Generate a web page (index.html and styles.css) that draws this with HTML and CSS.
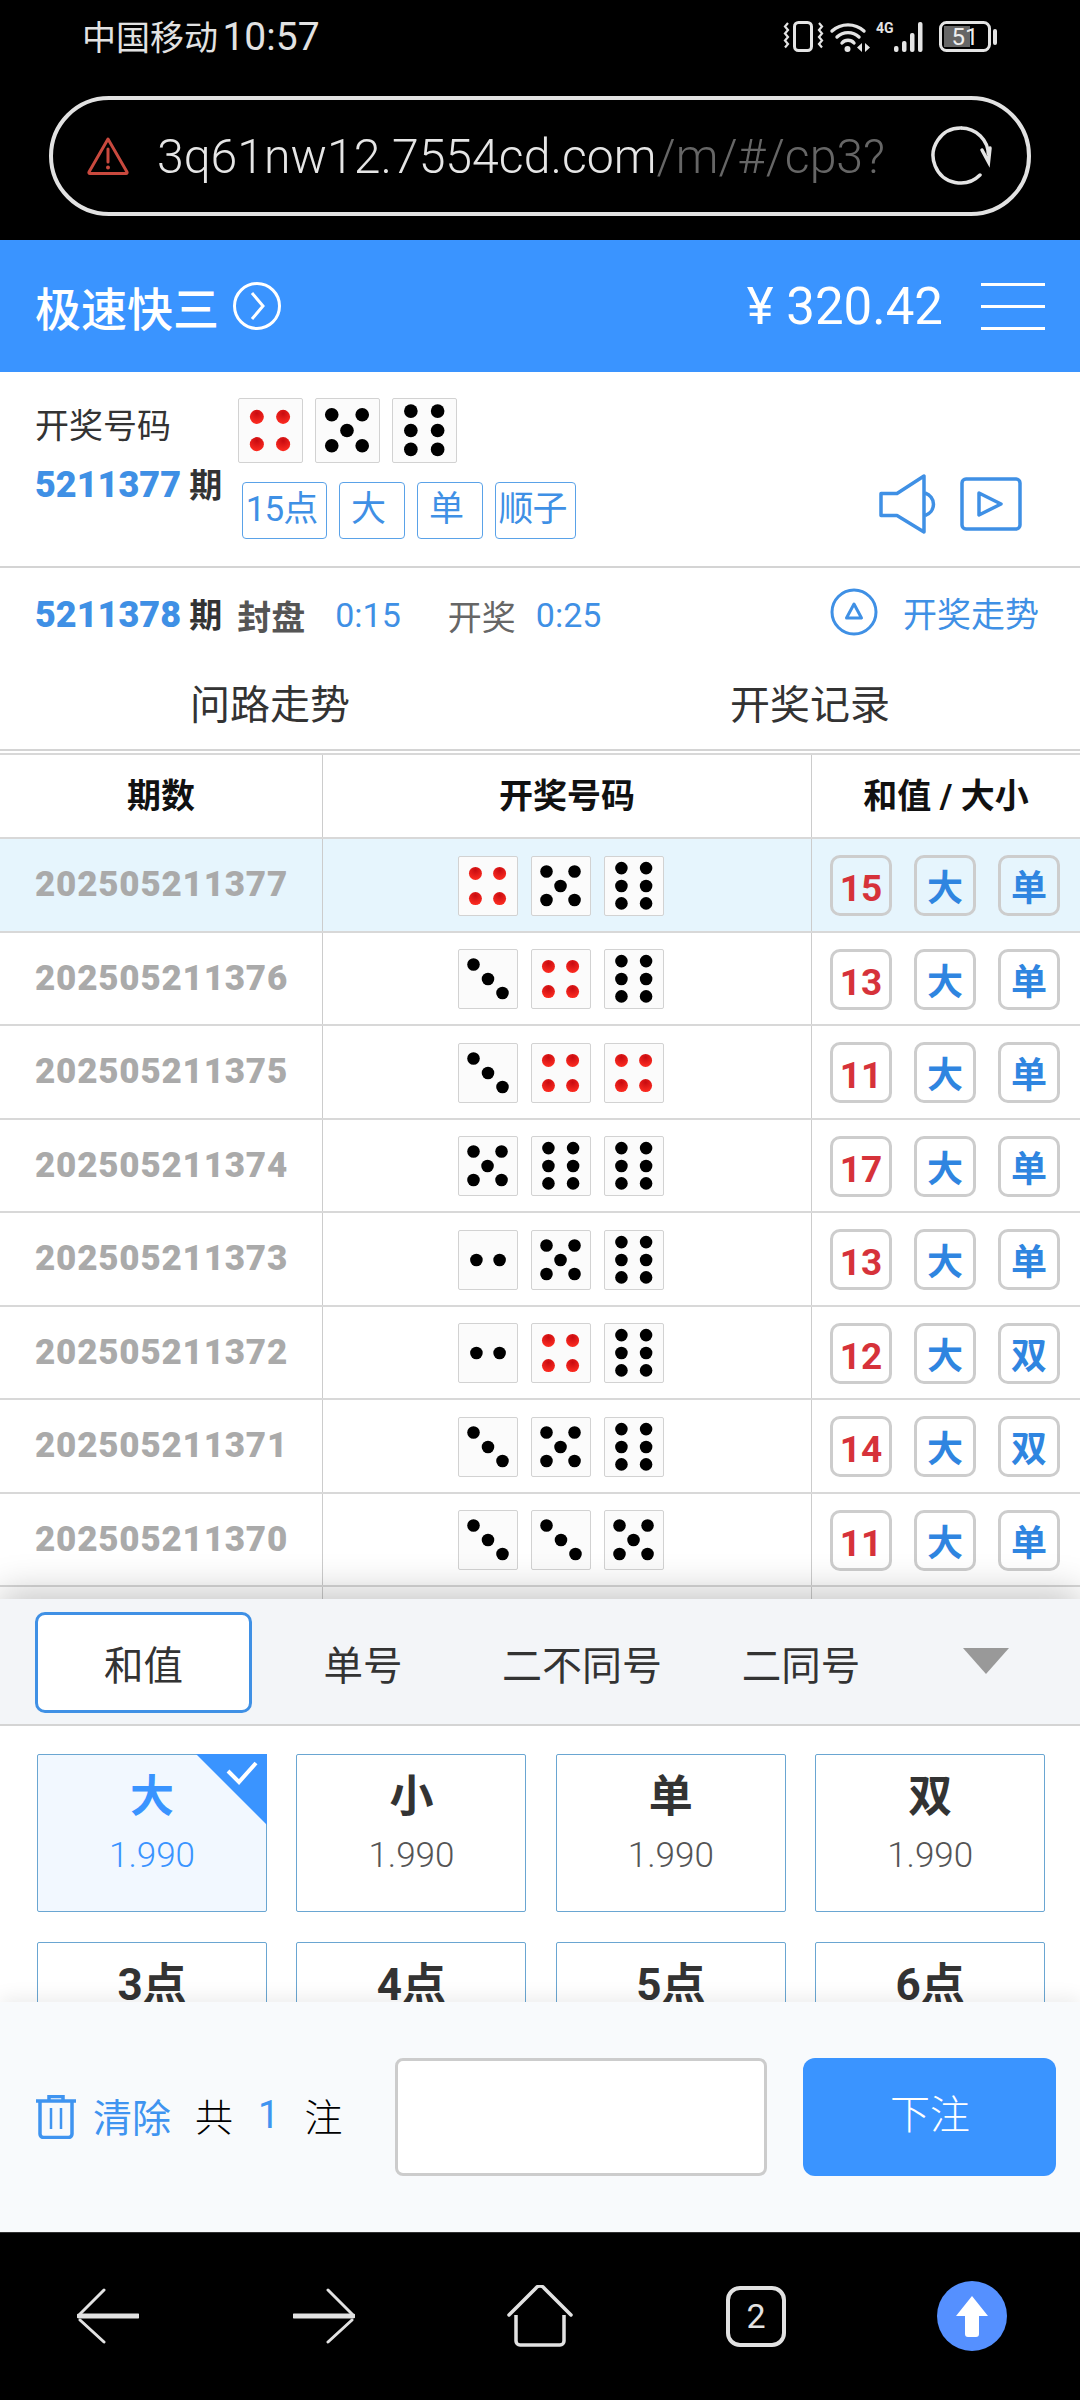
FILE: index.html
```html
<!DOCTYPE html>
<html lang="zh-CN">
<head>
<meta charset="utf-8">
<title>极速快三</title>
<link rel="stylesheet" href="styles.css">
</head>
<body>
<svg class="defs" width="0" height="0" aria-hidden="true">
  <defs>
    <radialGradient id="red" cx="50%" cy="25%" r="70%">
      <stop offset="0" stop-color="#c80b10"/>
      <stop offset="1" stop-color="#fa2a20"/>
    </radialGradient>
    <symbol id="d2" viewBox="0 0 60 60"><circle cx="18" cy="30" r="6.5"/><circle cx="42" cy="30" r="6.5"/></symbol>
    <symbol id="d3" viewBox="0 0 60 60"><circle cx="15" cy="15" r="6.5"/><circle cx="30" cy="30" r="6.5"/><circle cx="45" cy="44.5" r="6.5"/></symbol>
    <symbol id="d4" viewBox="0 0 60 60"><g fill="url(#red)"><circle cx="17" cy="17" r="6.7"/><circle cx="42" cy="17" r="6.7"/><circle cx="17" cy="43" r="6.7"/><circle cx="42" cy="43" r="6.7"/></g></symbol>
    <symbol id="d5" viewBox="0 0 60 60"><circle cx="15" cy="15" r="6.5"/><circle cx="44" cy="15" r="6.5"/><circle cx="29.5" cy="30" r="6.5"/><circle cx="15" cy="44.5" r="6.5"/><circle cx="44" cy="44.5" r="6.5"/></symbol>
    <symbol id="d6" viewBox="0 0 60 60"><circle cx="17" cy="11.5" r="6.5"/><circle cx="42.5" cy="11.5" r="6.5"/><circle cx="17" cy="30" r="6.5"/><circle cx="42.5" cy="30" r="6.5"/><circle cx="17" cy="48" r="6.5"/><circle cx="42.5" cy="48" r="6.5"/></symbol>
  </defs>
</svg>

<div class="status">
  <span class="status-text">中国移动 <span class="status-time">10:57</span></span>
  <svg class="status-icons" width="222" height="36" viewBox="0 0 222 36">
    <g fill="none" stroke="#e4e4e4">
      <rect x="16.5" y="2.5" width="17" height="28" rx="4" stroke-width="3"/>
      <path d="M10 3l-3 3.500 3 3.500-3 3.500 3 3.500-3 3.500 3 3.500-3 3.500M41 3l3 3.500-3 3.500 3 3.500-3 3.500 3 3.500-3 3.500 3 3.500" stroke-width="2.200"/>
      <g stroke-width="3.400" stroke-linecap="round">
        <path d="M54 11a24 24 0 0 1 32 0"/>
        <path d="M59 17a16 16 0 0 1 22 0"/>
        <path d="M64 23a8 8 0 0 1 12 0"/>
      </g>
      <rect x="162.500" y="2.500" width="49" height="28" rx="6" stroke-width="3"/>
    </g>
    <g fill="#e4e4e4">
      <circle cx="69.500" cy="29" r="3"/>
      <path d="M84 23l-5 4.500 5 4.500zM87 23l5 4.500-5 4.500z"/>
      <rect x="116" y="26" width="4.500" height="6" rx="2"/>
      <rect x="124" y="21" width="4.500" height="11" rx="2"/>
      <rect x="132" y="13" width="4.500" height="19" rx="2"/>
      <rect x="140" y="2" width="4.500" height="30" rx="2"/>
      <rect x="215" y="9" width="4" height="16" rx="2"/>
      <rect x="166" y="6" width="26" height="21" fill="#666"/>
      <text class="st-4g" x="98" y="13">4G</text>
      <text class="st-bat" x="187" y="25" text-anchor="middle">51</text>
    </g>
  </svg>
</div>

<div class="url-wrap">
  <div class="url">
    <svg class="url-warn" width="44" height="40" viewBox="0 0 44 40">
      <path d="M22 3L41 36a1 1 0 0 1-1 1.500H4a1 1 0 0 1-1-1.500z" fill="none" stroke="#c9493e" stroke-width="3" stroke-linejoin="round"/>
      <path d="M22 13v13" stroke="#c9493e" stroke-width="3" stroke-linecap="round"/>
      <circle cx="22" cy="31.500" r="2" fill="#c9493e"/>
    </svg>
    <span class="url-text">3q61nw12.7554cd.com<span class="url-dim">/m/#/cp3?</span></span>
    <svg class="url-reload" width="62" height="62" viewBox="0 0 62 62">
      <path d="M31 3a27.500 27.500 0 1 0 19 47" fill="none" stroke="#e4e4e4" stroke-width="3.500" stroke-linecap="round"/>
      <path d="M31 3a27.500 27.500 0 0 1 27.500 27.500" fill="none" stroke="#e4e4e4" stroke-width="3.500"/>
      <path d="M52 25l6.500 12 1.500-14" fill="none" stroke="#e4e4e4" stroke-width="3.500" stroke-linecap="round"/>
    </svg>
  </div>
</div>

<header class="top">
  <span class="top-title">极速快三</span>
  <svg class="top-go" width="50" height="50" viewBox="0 0 50 50">
    <circle cx="25" cy="25" r="22.500" fill="none" stroke="#fff" stroke-width="3"/>
    <path d="M20 12l11 13-11 13" fill="none" stroke="#fff" stroke-width="3"/>
  </svg>
  <span class="top-money">¥ 320.42</span>
  <div class="burger"><i></i><i></i><i></i></div>
</header>

<section class="draw">
  <div class="draw-left">
    <div class="draw-label">开奖号码</div>
    <div class="period"><b>5211377</b> 期</div>
  </div>
  <div class="draw-mid">
    <div class="draw-dice">
      <svg class="die die-lg"><use href="#d4"/></svg>
      <svg class="die die-lg"><use href="#d5"/></svg>
      <svg class="die die-lg"><use href="#d6"/></svg>
    </div>
    <div class="tags">
      <span class="tag tag-w">15点</span>
      <span class="tag">大</span>
      <span class="tag">单</span>
      <span class="tag tag-n">顺子</span>
    </div>
  </div>
  <div class="draw-tools">
    <svg width="60" height="60" viewBox="0 0 60 60">
      <path d="M2 19.500h16L45 2v56L18 41.500H2z" fill="none" stroke="#3f90e5" stroke-width="3.500" stroke-linejoin="round"/>
      <path d="M46 19a13 12 0 0 1 0 22.500" fill="none" stroke="#3f90e5" stroke-width="3.500"/>
    </svg>
    <svg width="62" height="54" viewBox="0 0 62 54">
      <rect x="2" y="2" width="58" height="50" rx="4" fill="none" stroke="#3f90e5" stroke-width="3.500"/>
      <path d="M19 16l22 11-22 11z" fill="none" stroke="#3f90e5" stroke-width="3.500" stroke-linejoin="round"/>
    </svg>
  </div>
</section>

<section class="count">
  <span class="period"><b>5211378</b> 期</span>
  <span class="count-seal">封盘</span>
  <span class="count-time count-t1">0:15</span>
  <span class="count-open">开奖</span>
  <span class="count-time count-t2">0:25</span>
  <svg class="count-icon" width="48" height="48" viewBox="0 0 48 48">
    <circle cx="24" cy="24" r="22" fill="none" stroke="#3f90e5" stroke-width="3"/>
    <path d="M24 16l7.500 14h-15z" fill="none" stroke="#3f90e5" stroke-width="3" stroke-linejoin="round"/>
  </svg>
  <span class="count-link">开奖走势</span>
</section>

<nav class="views">
  <span>问路走势</span>
  <span>开奖记录</span>
</nav>

<section class="table">
  <div class="row row-head">
    <div class="c-a">期数</div>
    <div class="c-b">开奖号码</div>
    <div class="c-c">和值 / 大小</div>
  </div>
  <div class="row row-on">
    <div class="c-a">202505211377</div>
    <div class="c-b"><svg class="die"><use href="#d4"/></svg><svg class="die"><use href="#d5"/></svg><svg class="die"><use href="#d6"/></svg></div>
    <div class="c-c"><span class="bd bd-r">15</span><span class="bd">大</span><span class="bd">单</span></div>
  </div>
  <div class="row">
    <div class="c-a">202505211376</div>
    <div class="c-b"><svg class="die"><use href="#d3"/></svg><svg class="die"><use href="#d4"/></svg><svg class="die"><use href="#d6"/></svg></div>
    <div class="c-c"><span class="bd bd-r">13</span><span class="bd">大</span><span class="bd">单</span></div>
  </div>
  <div class="row">
    <div class="c-a">202505211375</div>
    <div class="c-b"><svg class="die"><use href="#d3"/></svg><svg class="die"><use href="#d4"/></svg><svg class="die"><use href="#d4"/></svg></div>
    <div class="c-c"><span class="bd bd-r">11</span><span class="bd">大</span><span class="bd">单</span></div>
  </div>
  <div class="row">
    <div class="c-a">202505211374</div>
    <div class="c-b"><svg class="die"><use href="#d5"/></svg><svg class="die"><use href="#d6"/></svg><svg class="die"><use href="#d6"/></svg></div>
    <div class="c-c"><span class="bd bd-r">17</span><span class="bd">大</span><span class="bd">单</span></div>
  </div>
  <div class="row">
    <div class="c-a">202505211373</div>
    <div class="c-b"><svg class="die"><use href="#d2"/></svg><svg class="die"><use href="#d5"/></svg><svg class="die"><use href="#d6"/></svg></div>
    <div class="c-c"><span class="bd bd-r">13</span><span class="bd">大</span><span class="bd">单</span></div>
  </div>
  <div class="row">
    <div class="c-a">202505211372</div>
    <div class="c-b"><svg class="die"><use href="#d2"/></svg><svg class="die"><use href="#d4"/></svg><svg class="die"><use href="#d6"/></svg></div>
    <div class="c-c"><span class="bd bd-r">12</span><span class="bd">大</span><span class="bd">双</span></div>
  </div>
  <div class="row">
    <div class="c-a">202505211371</div>
    <div class="c-b"><svg class="die"><use href="#d3"/></svg><svg class="die"><use href="#d5"/></svg><svg class="die"><use href="#d6"/></svg></div>
    <div class="c-c"><span class="bd bd-r">14</span><span class="bd">大</span><span class="bd">双</span></div>
  </div>
  <div class="row">
    <div class="c-a">202505211370</div>
    <div class="c-b"><svg class="die"><use href="#d3"/></svg><svg class="die"><use href="#d3"/></svg><svg class="die"><use href="#d5"/></svg></div>
    <div class="c-c"><span class="bd bd-r">11</span><span class="bd">大</span><span class="bd">单</span></div>
  </div>
  <div class="row"><div class="c-a"></div><div class="c-b"></div><div class="c-c"></div></div>
</section>

<section class="bet">
  <div class="bet-tabs">
    <span class="bt bt-on">和值</span>
    <span class="bt">单号</span>
    <span class="bt bt-n">二不同号</span>
    <span class="bt">二同号</span>
    <svg class="bt-more" width="46" height="26" viewBox="0 0 46 26"><path d="M0 0h46L23 26z" fill="#999"/></svg>
  </div>
  <div class="bet-grid">
    <div class="opt opt-on">
      <svg class="opt-mark" width="71" height="71" viewBox="0 0 71 71">
        <path d="M0 0h71v71z" fill="#3a94ff"/>
        <path d="M32 17l11 11 17-19" fill="none" stroke="#fff" stroke-width="4"/>
      </svg>
      <span class="opt-name">大</span><span class="opt-odds">1.990</span>
    </div>
    <div class="opt"><span class="opt-name">小</span><span class="opt-odds">1.990</span></div>
    <div class="opt"><span class="opt-name">单</span><span class="opt-odds">1.990</span></div>
    <div class="opt"><span class="opt-name">双</span><span class="opt-odds">1.990</span></div>
    <div class="opt"><span class="opt-name">3点</span></div>
    <div class="opt"><span class="opt-name">4点</span></div>
    <div class="opt"><span class="opt-name">5点</span></div>
    <div class="opt"><span class="opt-name">6点</span></div>
  </div>
</section>

<footer class="foot">
  <svg class="foot-trash" width="40" height="44" viewBox="0 0 40 44">
    <path d="M0 6h40M13 6V1.500h14V6" fill="none" stroke="#3f94f0" stroke-width="3.500"/>
    <path d="M4 6v33a3.500 3.500 0 0 0 3.500 3.500h25a3.500 3.500 0 0 0 3.500-3.500V6" fill="none" stroke="#3f94f0" stroke-width="3.500"/>
    <path d="M15 13v21M25 13v21" stroke="#3f94f0" stroke-width="2.500"/>
  </svg>
  <span class="foot-clear">清除</span>
  <span class="foot-thin foot-gong">共</span>
  <span class="foot-num">1</span>
  <span class="foot-thin foot-zhu">注</span>
  <div class="foot-input"></div>
  <div class="foot-btn">下注</div>
</footer>

<div class="nav">
  <svg width="62" height="56" viewBox="0 0 62 56">
    <path d="M2 28h59" stroke="#e2e2e2" stroke-width="5" stroke-linecap="round"/>
    <path d="M27 2L3 26M3 32l24 22" fill="none" stroke="#e2e2e2" stroke-width="3" stroke-linecap="round"/>
  </svg>
  <svg width="62" height="56" viewBox="0 0 62 56">
    <path d="M1 28h59" stroke="#e2e2e2" stroke-width="5" stroke-linecap="round"/>
    <path d="M35 2l24 24M59 32L35 54" fill="none" stroke="#e2e2e2" stroke-width="3" stroke-linecap="round"/>
  </svg>
  <svg width="66" height="62" viewBox="0 0 66 62">
    <path d="M2 30L29 3a5 5 0 0 1 8 0L64 30" fill="none" stroke="#e2e2e2" stroke-width="3.500" stroke-linecap="round"/>
    <path d="M9 30v26a4 4 0 0 0 4 4h40a4 4 0 0 0 4-4V30" fill="none" stroke="#e2e2e2" stroke-width="3.500"/>
  </svg>
  <div class="nav-tab">2</div>
  <svg width="70" height="70" viewBox="0 0 70 70">
    <circle cx="35" cy="35" r="35" fill="#5590ff"/>
    <path d="M35 15L51 35H42V53a3 3 0 0 1-3 3H31a3 3 0 0 1-3-3V35H19z" fill="#fff"/>
  </svg>
</div>
</body>
</html>
```
FILE: styles.css
```css
* { box-sizing: border-box; }
html, body { margin: 0; padding: 0; }
body {
  width: 1080px;
  height: 2400px;
  overflow: hidden;
  background: #fff;
  color: #333;
  font-family: Roboto, "Noto Sans CJK SC", sans-serif;
}
.defs { position: absolute; }

.status {
  height: 96px;
  background: #000;
  display: flex;
  justify-content: space-between;
  align-items: flex-start;
  padding: 0 80px 0 82px;
  color: #e2e2e2;
}
.status-text { font-size: 34px; line-height: 74px; word-spacing: -4px; }
.status-time { font-size: 39px; }
.status-icons { margin-top: 20px; }
.st-4g { font: 700 14px Roboto, sans-serif; }
.st-bat { font: 400 24px Roboto, sans-serif; fill: #eee; }

.url-wrap { height: 144px; background: #000; padding: 0 49px; }
.url {
  height: 120px;
  border: 4px solid #e2e2e2;
  border-radius: 60px;
  display: flex;
  align-items: center;
  padding-left: 33px;
}
.url-text {
  margin-left: 27px;
  font-size: 48.200px;
  font-weight: 300;
  color: #e6e6e6;
  white-space: nowrap;
  width: 773px;
}
.url-dim { color: #666; }

.top {
  height: 132px;
  background: #3a94ff;
  color: #fff;
  display: flex;
  align-items: center;
  padding: 0 35px;
}
.top-title { font-size: 46px; font-weight: 500; }
.top-go { margin-left: 13px; }
.top-money { margin-left: auto; font-size: 51px; }
.burger {
  margin-left: 38px;
  width: 64px;
  height: 47px;
  display: flex;
  flex-direction: column;
  justify-content: space-between;
}
.burger i { display: block; height: 3px; background: #fff; }

.draw {
  height: 196px;
  border-bottom: 2px solid #d4d4d4;
  display: flex;
  align-items: flex-start;
  padding: 26px 58px 0 35px;
}
.draw-left { width: 203px; }
.draw-label { font-size: 34px; line-height: 56px; color: #333; }
.period { font-size: 33px; font-weight: 700; line-height: 58px; color: #333; margin-top: 2px; }
.period b { color: #3f90e5; font-size: 36px; }
.draw-dice { display: flex; gap: 12px; }
.die {
  display: block;
  width: 60px;
  height: 60px;
  background: #fbfbfb;
  border: 1px solid #d2d2d2;
  border-radius: 2px;
  fill: #000;
}
.die-lg { width: 65px; height: 65px; }
.tags { display: flex; gap: 12px; margin: 19px 0 0 4px; }
.tag {
  width: 66px;
  height: 57px;
  padding-right: 7px;
  border: 1px solid #5aa2e8;
  border-radius: 4px;
  color: #3f90e5;
  font-size: 35px;
  line-height: 53px;
  text-align: center;
  white-space: nowrap;
}
.tag-w { width: 85px; letter-spacing: -1px; padding-right: 6px; }
.tag-n { width: 81px; letter-spacing: -1px; padding-right: 6px; }
.draw-tools { margin: 76px 0 0 auto; display: flex; gap: 21px; align-items: center; }

.count {
  height: 94px;
  display: flex;
  align-items: center;
  padding: 0 41px 0 35px;
  font-size: 33px;
}
.count .period { margin-top: 0; }
.count-seal { margin-left: 15px; font-weight: 700; color: #555; font-size: 34px; }
.count-time { color: #3f90e5; font-size: 34px; }
.count-t1 { margin-left: 30px; }
.count-open { margin-left: 47px; color: #666; font-size: 34px; }
.count-t2 { margin-left: 20px; }
.count-icon { margin: -6px 0 0 auto; }
.count-link { margin: -6px 0 0 25px; color: #3f90e5; font-size: 34px; }

.views {
  height: 89px;
  border-bottom: 2px solid #d4d4d4;
  display: grid;
  grid-template-columns: 1fr 1fr;
  text-align: center;
  font-size: 40px;
  line-height: 87px;
  color: #333;
}

.table { margin-top: 2px; height: 846px; overflow: hidden; }
.row {
  display: grid;
  grid-template-columns: 322px 489px 269px;
  height: 93.5px;
  border-top: 2px solid #d8d8d8;
}
.row > div { display: flex; align-items: center; }
.row-on { background: #e6f5fd; }
.row-head { height: 84px; font-size: 34px; font-weight: 700; color: #111; }
.row-head > div { justify-content: center; padding: 0 0 5px; }
.c-a {
  padding-left: 35px;
  font-size: 35px;
  font-weight: 900;
  letter-spacing: .8px;
  color: #aaa;
}
.row-head .c-a { font-size: 34px; font-weight: 700; letter-spacing: 0; color: #111; }
.c-b { border-left: 1px solid #ccc; justify-content: center; gap: 13px; padding: 2px 13px 0 0; }
.c-c { border-left: 1px solid #ccc; padding: 2px 0 0 18px; gap: 22px; }
.bd {
  width: 62px;
  height: 61px;
  border: 3px solid #cdcdcd;
  border-radius: 10px;
  text-align: center;
  color: #2f85e0;
  font-size: 36px;
  font-weight: 700;
  line-height: 62px;
}
.bd-r { color: #d6323a; font-size: 37px; }

.bet {
  position: relative;
  height: 403px;
  overflow: hidden;
  background: #fff;
  box-shadow: 0 -8px 34px rgba(0, 0, 0, .22);
}
.bet-tabs {
  height: 127px;
  background: #f3f5f8;
  border-bottom: 2px solid #d4d4d4;
  display: flex;
  align-items: flex-start;
  padding: 13px 0 0 35px;
  color: #333;
  font-size: 39.500px;
}
.bt { width: 222px; height: 100px; line-height: 110px; text-align: center; white-space: nowrap; }
.bt-n { width: 216px; font-size: 40px; }
.bt-on {
  width: 217px;
  height: 101px;
  background: #fff;
  border: 3px solid #3f90e5;
  border-radius: 10px;
  line-height: 103px;
}
.bt-more { margin: 36px 0 0 51px; }
.bet-grid {
  display: grid;
  grid-template-columns: repeat(4, 230px);
  grid-auto-rows: 158px;
  gap: 30px 29.400px;
  padding: 28px 0 0 37px;
}
.opt {
  position: relative;
  border: 1px solid #6aa6d2;
  border-radius: 2px;
  display: flex;
  flex-direction: column;
  align-items: center;
  padding-top: 14px;
  color: #333;
}
.opt-on { background: #f2f8ff; color: #3a94ff; }
.opt-mark { position: absolute; top: -1px; right: -1px; }
.opt-name { font-size: 44px; font-weight: 700; line-height: 56px; white-space: nowrap; }
.opt-odds { margin-top: 11px; font-size: 35px; line-height: 40px; font-weight: 300; color: #555; }
.opt-on .opt-odds { color: #3a94ff; }

.foot {
  position: relative;
  height: 230px;
  background: #f8fafc;
  display: flex;
  align-items: center;
  padding: 0 23px 0 36px;
  box-shadow: 0 -4px 18px rgba(0, 0, 0, .08);
}
.foot > * { flex: none; }
.foot-clear { margin: 0 0 5px 17px; font-size: 39px; color: #3f94f0; white-space: nowrap; }
.foot-thin { margin-bottom: 5px; font-size: 38px; font-weight: 300; color: #000; }
.foot-gong { margin-left: 24px; }
.foot-num { margin: 0 0 5px 25px; font-size: 38px; color: #3f94f0; }
.foot-zhu { margin-left: 25px; }
.foot-input {
  margin-left: 53px;
  width: 372px;
  height: 118px;
  background: #fff;
  border: 3px solid #ccc;
  border-radius: 8px;
}
.foot-btn {
  margin-left: 36px;
  width: 253px;
  height: 118px;
  background: #3a94ff;
  border-radius: 12px;
  color: #fff;
  font-size: 40px;
  font-weight: 300;
  line-height: 116px;
  text-align: center;
}

.nav {
  height: 168px;
  background: #000;
  border-top: 1px solid #333;
  display: grid;
  grid-template-columns: repeat(5, 216px);
  justify-items: center;
  align-items: center;
  padding-bottom: 1px;
}
.nav-tab {
  width: 60px;
  height: 61px;
  border: 4px solid #e2e2e2;
  border-radius: 14px;
  color: #e2e2e2;
  font-size: 34px;
  line-height: 52px;
  text-align: center;
}
```
